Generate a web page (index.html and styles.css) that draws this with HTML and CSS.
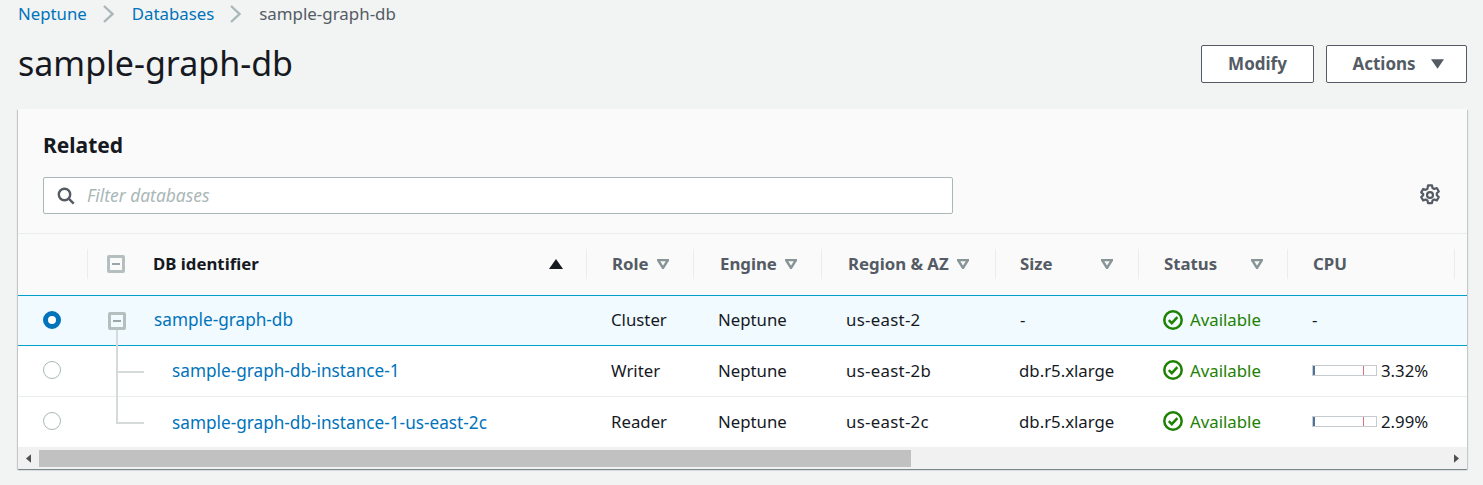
FILE: index.html
```html
<!DOCTYPE html>
<html lang="en">
<head>
<meta charset="utf-8">
<title>sample-graph-db</title>
<link rel="stylesheet" href="styles.css">
</head>
<body>
<nav class="crumbs">
  <a href="#">Neptune</a>
  <svg class="crumb-sep" viewBox="0 0 11 18"><path d="M1 1l8.5 8L1 17"/></svg>
  <a href="#">Databases</a>
  <svg class="crumb-sep" viewBox="0 0 11 18"><path d="M1 1l8.5 8L1 17"/></svg>
  <span class="crumb-current">sample-graph-db</span>
</nav>
<header class="head">
  <h1>sample-graph-db</h1>
  <div class="actions">
    <button class="btn btn-modify">Modify</button>
    <button class="btn btn-actions">Actions<svg class="caret" viewBox="0 0 14 10"><path d="M0 0h14L7 10z"/></svg></button>
  </div>
</header>
<section class="card">
  <div class="card-head">
    <h2>Related</h2>
    <div class="tools">
      <label class="search">
        <svg class="search-icon" viewBox="0 0 18 18"><circle cx="7.5" cy="7.5" r="5.7"/><path d="M11.7 11.7l5 5"/></svg>
        <input type="text" placeholder="Filter databases">
      </label>
      <svg class="gear" viewBox="0 0 20 20"><path d="M8.2 1.2h3.6l.5 2.4 1.6.9 2.3-.8 1.8 3.1-1.8 1.6v1.8l1.8 1.6-1.8 3.1-2.3-.8-1.6.9-.5 2.4H8.2l-.5-2.4-1.6-.9-2.3.8-1.8-3.1 1.8-1.6V9.2L2 7.6l1.8-3.1 2.3.8 1.6-.9z"/><circle cx="10" cy="10" r="2.7"/></svg>
    </div>
  </div>
  <div class="table">
    <div class="row row-head">
      <div class="cell"></div>
      <div class="cell th first"><span class="toggle"></span><span class="th-id">DB identifier</span><svg class="sort-on" viewBox="0 0 14 10"><path d="M7 0l7 10H0z"/></svg></div>
      <div class="cell th"><span>Role</span><svg class="sort" viewBox="0 0 12 10"><path d="M1 1h10L6 9z"/></svg></div>
      <div class="cell th th-right"><span>Engine</span><svg class="sort" viewBox="0 0 12 10"><path d="M1 1h10L6 9z"/></svg></div>
      <div class="cell th th-right"><span>Region &amp; AZ</span><svg class="sort" viewBox="0 0 12 10"><path d="M1 1h10L6 9z"/></svg></div>
      <div class="cell th th-wide th-left"><span>Size</span><svg class="sort" viewBox="0 0 12 10"><path d="M1 1h10L6 9z"/></svg></div>
      <div class="cell th th-wide th-end"><span>Status</span><svg class="sort" viewBox="0 0 12 10"><path d="M1 1h10L6 9z"/></svg></div>
      <div class="cell th"><span>CPU</span></div>
      <div class="cell th"></div>
    </div>
    <div class="row row-selected">
      <div class="cell radio-cell"><span class="radio radio-on"></span></div>
      <div class="cell name"><span class="toggle toggle-root"></span><a href="#">sample-graph-db</a></div>
      <div class="cell">Cluster</div>
      <div class="cell">Neptune</div>
      <div class="cell az">us-east-2</div>
      <div class="cell">-</div>
      <div class="cell status"><svg class="ok" viewBox="0 0 20 20"><circle cx="10" cy="10" r="8.7"/><path d="M5.8 10.2l3 3 5.6-6"/></svg>Available</div>
      <div class="cell">-</div>
      <div class="cell"></div>
    </div>
    <div class="row row-child">
      <div class="cell radio-cell"><span class="radio"></span></div>
      <div class="cell name child child-mid"><a href="#">sample-graph-db-instance-1</a></div>
      <div class="cell">Writer</div>
      <div class="cell">Neptune</div>
      <div class="cell az">us-east-2b</div>
      <div class="cell size">db.r5.xlarge</div>
      <div class="cell status"><svg class="ok" viewBox="0 0 20 20"><circle cx="10" cy="10" r="8.7"/><path d="M5.8 10.2l3 3 5.6-6"/></svg>Available</div>
      <div class="cell cpu"><span class="meter"><span class="meter-fill" style="width:3.32%"></span></span>3.32%</div>
      <div class="cell"></div>
    </div>
    <div class="row row-child row-last">
      <div class="cell radio-cell"><span class="radio"></span></div>
      <div class="cell name child child-end"><a href="#">sample-graph-db-instance-1-us-east-2c</a></div>
      <div class="cell">Reader</div>
      <div class="cell">Neptune</div>
      <div class="cell az">us-east-2c</div>
      <div class="cell size">db.r5.xlarge</div>
      <div class="cell status"><svg class="ok" viewBox="0 0 20 20"><circle cx="10" cy="10" r="8.7"/><path d="M5.8 10.2l3 3 5.6-6"/></svg>Available</div>
      <div class="cell cpu"><span class="meter"><span class="meter-fill" style="width:2.99%"></span></span>2.99%</div>
      <div class="cell"></div>
    </div>
  </div>
  <div class="scrollbar">
    <svg class="arrow" viewBox="0 0 6 10"><path d="M6 0v10L0 5z"/></svg>
    <div class="track"><div class="thumb"></div></div>
    <svg class="arrow" viewBox="0 0 6 10"><path d="M0 0v10l6-5z"/></svg>
  </div>
</section>
</body>
</html>
```
FILE: styles.css
```css
* { box-sizing: border-box; }
html, body { margin: 0; padding: 0; }
body {
  background: #f2f3f3;
  color: #16191f;
  font-family: "Noto Sans", "Open Sans", sans-serif;
  font-size: 16.8px;
  height: 485px;
  overflow: hidden;
  padding: 0 16px 0 18px;
}
a { color: #0073bb; text-decoration: none; }

.crumbs {
  display: flex;
  align-items: center;
  height: 28px;
  padding-bottom: 2px;
  font-size: 16.8px;
  color: #545b64;
}
.crumb-sep {
  width: 11px;
  height: 18px;
  margin: 2px 18px 0 16px;
  fill: none;
  stroke: #aab7b8;
  stroke-width: 2.4;
}
.crumb-current { font-size: 16.9px; }

.head {
  display: flex;
  align-items: flex-start;
  justify-content: space-between;
  height: 81px;
}
h1 {
  margin: 0;
  font-size: 34px;
  line-height: 46px;
  padding-top: 12px;
  font-weight: 400;
}
.actions { display: flex; gap: 12px; padding-top: 17px; }
.btn {
  height: 38px;
  border: 1px solid #545b64;
  border-radius: 2px;
  background: #fff;
  color: #545b64;
  font: 700 17px "Noto Sans", sans-serif;
  display: flex;
  align-items: center;
  justify-content: center;
  padding: 0 0 2px;
}
.btn-modify { width: 113px; }
.btn-actions { width: 141px; gap: 15px; padding-left: 3px; }
.caret { width: 13px; height: 10px; margin-top: 2px; fill: #545b64; }

.card {
  width: 1449px;
  height: 360px;
  background: #fafafa;
  box-shadow: 0 1px 1px 0 rgba(0,28,36,.3), 1px 1px 1px 0 rgba(0,28,36,.15), -1px 1px 1px 0 rgba(0,28,36,.15);
}
.card-head {
  height: 125px;
  padding: 19px 25px 0 25px;
  border-bottom: 1px solid #eaeded;
}
h2 {
  margin: 0;
  font-size: 21px;
  line-height: 34px;
  font-weight: 700;
}
.tools {
  display: flex;
  align-items: center;
  justify-content: space-between;
  margin-top: 15px;
}
.search {
  display: flex;
  align-items: center;
  width: 910px;
  height: 37px;
  border: 1px solid #aab7b8;
  border-radius: 2px;
  background: #fff;
  padding-left: 13px;
}
.search-icon {
  width: 18px;
  height: 18px;
  fill: none;
  stroke: #545b64;
  stroke-width: 2.4;
  flex: none;
}
.search input {
  border: 0;
  outline: 0;
  background: transparent;
  flex: 1;
  margin: -2px 0 0 12px;
  padding: 0;
  font: italic 400 17.4px "Noto Sans", sans-serif;
}
.search input::placeholder { color: #aab7b8; opacity: 1; }
.gear {
  width: 22px;
  height: 22px;
  margin: -1px 1px 0 0;
  fill: none;
  stroke: #545b64;
  stroke-width: 2;
  stroke-linejoin: round;
}

.row {
  display: grid;
  grid-template-columns: 69px 499px 107px 128px 174px 143px 149px 167px 13px;
  background: #fff;
  position: relative;
}
.cell {
  display: flex;
  align-items: center;
  padding: 0 0 2px 25px;
  min-width: 0;
  white-space: nowrap;
  color: #16191f;
}
.row-head { height: 61px; background: #fafafa; align-items: center; }
.th {
  height: 30px;
  position: relative;
  margin-top: -2px;
  padding-bottom: 0;
  font-size: 16.8px;
  font-weight: 700;
  color: #545b64;
  border-left: 1px solid #eaeded;
  gap: 8px;
}
.th-wide { justify-content: space-between; padding-right: 25px; }
.th-right { padding-left: 26px; }
.th-left { padding-left: 24px; }
.th-end { padding-right: 24px; }
.th.first { padding-left: 19px; gap: 0; }
.th-id { color: #16191f; margin-left: 28px; }
.sort { width: 12px; height: 10px; fill: none; stroke: #879596; stroke-width: 2.4; }
.sort-on { width: 14px; height: 10px; fill: #16191f; margin-left: 290px; }
.toggle {
  width: 18px;
  height: 18px;
  border: 3px solid #b4bfc0;
  border-radius: 2px;
  background: linear-gradient(#9aa7a8,#9aa7a8) center / 8px 2px no-repeat;
  flex: none;
  position: relative;
  z-index: 1;
}
.row-selected {
  height: 51px;
  background: #f1faff;
  border-top: 1px solid #00a1c9;
  border-bottom: 1px solid #00a1c9;
}
.row-selected .toggle-root { margin-top: 3px; }
.row-child { height: 51px; border-bottom: 1px solid #eaeded; }
.row-last { height: 50px; border-bottom: 0; }
.radio-cell { padding-left: 25px; }
.radio {
  width: 18px;
  height: 18px;
  border-radius: 50%;
  border: 1px solid #aab7b8;
  background: #fff;
}
.radio-on { border: 5px solid #0073bb; }
.name { padding-left: 21px; }
.name a { font-size: 17.2px; }
.toggle-root { margin-right: 28px; background-color: #f1faff; }
.child { padding-left: 85px; position: relative; }
.child-end { padding-bottom: 0; }
.child::before {
  content: "";
  position: absolute;
  left: 29px;
  top: -1px;
  width: 26px;
  height: 26px;
  border-left: 2px solid #d5dbdb;
  border-bottom: 2px solid #d5dbdb;
}
.child-mid::before { top: -18px; height: 43px; }
.child-mid::after {
  content: "";
  position: absolute;
  left: 29px;
  top: 25px;
  bottom: -1px;
  border-left: 2px solid #d5dbdb;
}
.child-end::before { border-bottom-left-radius: 1px; }
.az { letter-spacing: .3px; }
.size { padding-left: 24px; }
.status { color: #1d8102; }
.ok {
  width: 20px;
  height: 20px;
  margin-right: 7px;
  fill: none;
  stroke: #1d8102;
  stroke-width: 2.5;
  flex: none;
}
.cpu { padding-left: 25px; }
.meter {
  position: relative;
  display: block;
  width: 65px;
  height: 11px;
  margin-right: 4px;
  border: 1px solid #c6cbcf;
  background: #fff;
}
.meter-fill { display: block; height: 100%; min-width: 1px; background: #4f7297; }
.meter::after {
  content: "";
  position: absolute;
  left: 50px;
  top: 0;
  bottom: 0;
  width: 1px;
  background: #d9707a;
}
.scrollbar {
  height: 22px;
  background: #f1f1f1;
  display: flex;
  align-items: center;
}
.arrow { width: 5px; height: 9px; margin: 0 8px; fill: #505050; flex: none; }
.track { flex: 1; height: 17px; }
.thumb { width: 872px; height: 100%; background: #c1c1c1; }
```
